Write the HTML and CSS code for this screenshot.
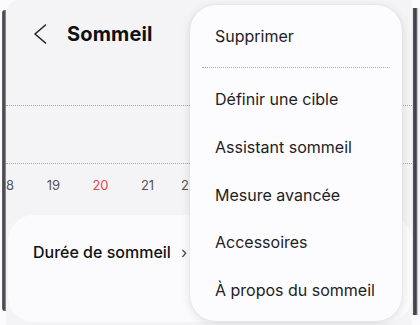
FILE: index.html
```html
<!DOCTYPE html>
<html lang="fr">
<head>
<meta charset="utf-8">
<link rel="stylesheet" href="styles.css">
</head>
<body>
<div class="device">
  <div class="frame-left"></div>
  <div class="screen">
    <header class="topbar">
      <svg class="back" width="14" height="22" viewBox="0 0 14 22"><path d="M12.5 2 L2 11 L12.5 20" fill="none" stroke="#222" stroke-width="1.6" stroke-linecap="round" stroke-linejoin="round"/></svg>
      <h1 class="title">Sommeil</h1>
    </header>
    <div class="chart">
      <div class="line-goal"></div>
      <div class="line-base"></div>
      <div class="days">
        <span class="day d-cut">8</span>
        <span class="day">19</span>
        <span class="day today">20</span>
        <span class="day">21</span>
        <span class="day d-last">2</span>
      </div>
    </div>
    <section class="card">
      <div class="card-row">Durée de sommeil <span class="chev">›</span></div>
    </section>
  </div>
  <div class="frame-right"></div>

  <nav class="menu">
    <div class="item first">Supprimer</div>
    <div class="divider"></div>
    <div class="item">Définir une cible</div>
    <div class="item">Assistant sommeil</div>
    <div class="item">Mesure avancée</div>
    <div class="item">Accessoires</div>
    <div class="item">À propos du sommeil</div>
  </nav>
</div>
</body>
</html>
```
FILE: styles.css
```css
* { box-sizing: border-box; }
html, body { margin: 0; padding: 0; }
body {
  width: 420px;
  height: 325px;
  overflow: hidden;
  background: #fbfbfd;
  font-family: Inter, Roboto, "Noto Sans", sans-serif;
  color: #1c1c1e;
}
.device {
  position: relative;
  display: flex;
  width: 420px;
  height: 325px;
}
.frame-left {
  width: 4px;
  margin: 10px 0 14px 2px;
  border-radius: 3px 0 0 3px;
  background: linear-gradient(to right, #6b6b72, #3c3c44 50%, #9a9aa0);
  flex: none;
}
.screen {
  flex: 1;
  background: #f4f4f7;
  border-top-left-radius: 14px;
  display: flex;
  flex-direction: column;
  overflow: hidden;
}
.frame-right {
  width: 8px;
  flex: none;
  margin: 8px 0 10px 0;
  background: linear-gradient(to right, #e6e6ea 0 1px, #55555e 1px, #3b3b44 4px, #8a8a92 5px, #f4f4f6 6px);
}
.topbar {
  display: flex;
  align-items: center;
  height: 66px;
  padding: 2px 0 0 27px;
}
.back { margin-right: 20px; flex: none; }
.title {
  margin: 0;
  font-size: 20px;
  font-weight: 700;
  letter-spacing: 0.15px;
  color: #111;
}
.chart {
  height: 149px;
  flex: none;
}
.line-goal {
  margin-top: 39px;
  border-top: 1px dotted #9a9af2;
}
.line-base {
  margin-top: 57px;
  border-top: 1px dotted #a8a8b0;
}
.days {
  display: flex;
  margin-top: 13px;
  font-size: 13px;
  color: #555;
}
.day {
  width: 47px;
  flex: none;
  text-align: center;
}
.d-cut {
  width: 7px;
  margin-right: 17px;
  text-align: right;
}
.d-last {
  text-align: left;
  padding-left: 10px;
}
.today { color: #e04a4a; }
.card {
  flex: 1;
  margin: 0 0 3px 2px;
  background: #fbfbfd;
  border-radius: 26px;
  padding: 27px 0 0 25px;
}
.card-row {
  font-size: 16px;
  font-weight: 500;
  color: #111;
}
.chev { color: #444; font-weight: 400; margin-left: 6px; }
.menu {
  position: absolute;
  left: 190px;
  top: 5px;
  width: 212px;
  height: 316px;
  background: #fcfcfe;
  border-radius: 26px;
  box-shadow: 0 2px 10px rgba(0,0,0,0.12), 0 0 2px rgba(0,0,0,0.06);
  padding: 18px 0 0 25px;
}
.item {
  font-size: 16px;
  color: #222;
  height: 47.75px;
  line-height: 26px;
}
.item.first { height: 26px; }
.divider {
  margin: 18px 12px 18px -13px;
  border-top: 1px dotted #b0b0b8;
  height: 1px;
}
```
